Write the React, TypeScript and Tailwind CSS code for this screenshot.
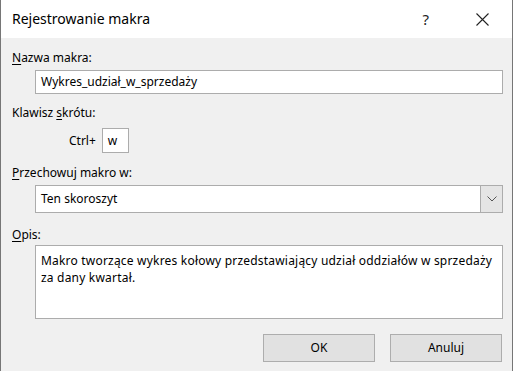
import React from "react";

const font = { fontFamily: '"Segoe UI", "Noto Sans", "Open Sans", sans-serif' };

export default function App() {
  return (
    <div
      className="w-[513px] h-[371px] overflow-hidden border-x border-[#767676] bg-[#f0f0f0] flex flex-col text-[12px] text-black"
      style={font}
    >
      <div className="h-[38px] bg-white flex items-center shrink-0">
        <div className="pl-[11px] text-[14px] leading-none flex-1">Rejestrowanie makra</div>
        <div className="text-[15px] leading-none mr-[47px] text-[#222]">?</div>
        <svg width="13" height="13" viewBox="0 0 13 13" className="mr-[23px]">
          <path d="M0.5 0.5 L12.5 12.5 M12.5 0.5 L0.5 12.5" stroke="#222" strokeWidth="1.1" fill="none" />
        </svg>
      </div>
      <div className="flex flex-col pl-[11px] pr-[9px] pt-[12px]">
        <div className="leading-[16px]">
          <span className="underline underline-offset-2">N</span>azwa makra:
        </div>
        <div className="mt-[4px] ml-[23px] h-[24px] bg-white border border-[#acacac] flex items-center px-[5px] leading-none">
          Wykres_udział_w_sprzedaży
        </div>
        <div className="mt-[11px] leading-[16px]">
          Klawisz <span className="underline underline-offset-2">s</span>krótu:
        </div>
        <div className="mt-[7px] flex items-center">
          <span className="ml-[57px] leading-none">Ctrl+</span>
          <div className="ml-[6px] w-[27px] h-[25px] bg-white border border-[#acacac] flex items-center px-[5px] leading-none">
            w
          </div>
        </div>
        <div className="mt-[12px] leading-[16px]">
          <span className="underline underline-offset-2">P</span>rzechowuj makro w:
        </div>
        <div className="mt-[4px] ml-[23px] h-[28px] bg-white border border-[#acacac] flex items-center">
          <div className="flex-1 px-[5px] leading-none">Ten skoroszyt</div>
          <div className="w-[22px] h-full bg-[#e5e5e5] border-l border-[#acacac] flex items-center justify-center">
            <svg width="10" height="6" viewBox="0 0 10 6">
              <path d="M0.5 0.5 L5 5 L9.5 0.5" stroke="#555" strokeWidth="1" fill="none" />
            </svg>
          </div>
        </div>
        <div className="mt-[14px] leading-[16px]">
          <span className="underline underline-offset-2">O</span>pis:
        </div>
        <div className="mt-[2px] ml-[23px] h-[74px] bg-white border border-[#acacac] px-[5px] pt-[6px] leading-[17px] tracking-[0.2px]">
          Makro tworzące wykres kołowy przedstawiający udział oddziałów w sprzedaży za dany kwartał.
        </div>
        <div className="mt-[15px] flex justify-end gap-[15px] mr-[1px]">
          <div className="w-[112px] h-[28px] bg-[#e1e1e1] border border-[#adadad] flex items-center justify-center">OK</div>
          <div className="w-[112px] h-[28px] bg-[#e1e1e1] border border-[#adadad] flex items-center justify-center">Anuluj</div>
        </div>
      </div>
    </div>
  );
}
